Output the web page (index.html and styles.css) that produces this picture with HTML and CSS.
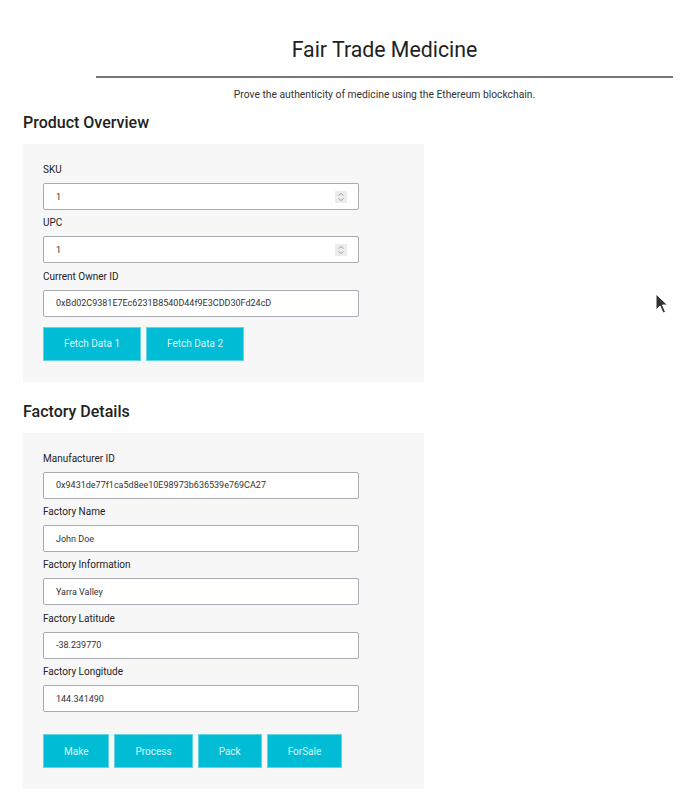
FILE: index.html
```html
<!DOCTYPE html>
<html lang="en">
<head>
<meta charset="utf-8">
<title>Fair Trade Medicine</title>
<link rel="stylesheet" href="styles.css">
</head>
<body>
<div class="page">
  <header class="header">
    <h1 class="title">Fair Trade Medicine</h1>
    <hr class="rule">
    <p class="subtitle">Prove the authenticity of medicine using the Ethereum blockchain.</p>
  </header>

  <h2 class="section-title">Product Overview</h2>
  <section class="card">
    <label class="label">SKU</label>
    <div class="field">
      <input class="input" type="text" value="1">
      <span class="spinner"><svg width="8" height="10" viewBox="0 0 8 10"><path d="M1.5 3.5 L4 1.5 L6.5 3.5 M1.5 6.5 L4 8.5 L6.5 6.5" fill="none" stroke="#9a9a9a" stroke-width="0.9"/></svg></span>
    </div>
    <label class="label">UPC</label>
    <div class="field">
      <input class="input" type="text" value="1">
      <span class="spinner"><svg width="8" height="10" viewBox="0 0 8 10"><path d="M1.5 3.5 L4 1.5 L6.5 3.5 M1.5 6.5 L4 8.5 L6.5 6.5" fill="none" stroke="#9a9a9a" stroke-width="0.9"/></svg></span>
    </div>
    <label class="label">Current Owner ID</label>
    <div class="field">
      <input class="input" type="text" value="0xBd02C9381E7Ec6231B8540D44f9E3CDD30Fd24cD">
    </div>
    <div class="buttons buttons-first">
      <button class="btn">Fetch Data 1</button>
      <button class="btn">Fetch Data 2</button>
    </div>
  </section>

  <h2 class="section-title section-gap">Factory Details</h2>
  <section class="card">
    <label class="label">Manufacturer ID</label>
    <div class="field"><input class="input" type="text" value="0x9431de77f1ca5d8ee10E98973b636539e769CA27"></div>
    <label class="label">Factory Name</label>
    <div class="field"><input class="input" type="text" value="John Doe"></div>
    <label class="label">Factory Information</label>
    <div class="field"><input class="input" type="text" value="Yarra Valley"></div>
    <label class="label">Factory Latitude</label>
    <div class="field"><input class="input" type="text" value="-38.239770"></div>
    <label class="label">Factory Longitude</label>
    <div class="field"><input class="input" type="text" value="144.341490"></div>
    <div class="buttons buttons-second">
      <button class="btn">Make</button>
      <button class="btn">Process</button>
      <button class="btn">Pack</button>
      <button class="btn">ForSale</button>
    </div>
  </section>
</div>
<svg class="cursor" width="14" height="22" viewBox="0 0 14 22"><path d="M1 1 L1 17 L5 13 L8 20 L10.5 19 L7.5 12 L12.5 12 Z" fill="#333" stroke="#fff" stroke-width="1"/></svg>
</body>
</html>
```
FILE: styles.css
```css
html, body {
  margin: 0;
  padding: 0;
  background: #ffffff;
}
body {
  font-family: Roboto, "Liberation Sans", sans-serif;
  color: #333;
}
.page {
  padding: 0 0 10px 23px;
}
.header {
  margin-left: 73px;
  width: 577px;
  text-align: center;
}
.title {
  margin: 37px 0 0;
  font-size: 21.3px;
  line-height: 25px;
  font-weight: 400;
  color: #222;
}
.rule {
  margin: 14px 0 0;
  border: 0;
  height: 2px;
  background: #777;
}
.subtitle {
  margin: 11px 0 0;
  font-size: 10.3px;
  line-height: 12px;
  color: #333;
}
.section-title {
  margin: 12px 0 0;
  font-size: 16px;
  line-height: 19px;
  font-weight: 500;
  color: #222;
}
.section-gap {
  margin-top: 20px;
}
.card {
  margin-top: 12px;
  width: 361px;
  padding: 20px 20px 21px;
  background: #f7f7f7;
  display: flex;
  flex-direction: column;
}
.label {
  display: block;
  font-size: 10px;
  line-height: 12px;
  font-weight: 400;
  color: #222;
  margin-bottom: 7px;
}
.field {
  position: relative;
  width: 316px;
  margin-bottom: 7.3px;
}
.input {
  box-sizing: border-box;
  display: block;
  width: 316px;
  height: 27px;
  margin: 0;
  padding: 0 12px;
  border: 1px solid #aaaab2;
  border-radius: 2px;
  background: #fff;
  font-family: Roboto, "Liberation Sans", sans-serif;
  font-size: 9px;
  color: #333;
  outline: none;
}
.spinner {
  position: absolute;
  right: 12px;
  top: 8px;
  width: 12px;
  height: 12px;
  background: #ececec;
  display: flex;
  align-items: center;
  justify-content: center;
}
.buttons {
  display: flex;
  gap: 5px;
}
.buttons-first {
  margin-top: 3px;
}
.buttons-second {
  margin-top: 15px;
}
.btn {
  height: 34px;
  padding: 0 20px;
  margin: 0;
  border: 1px solid #62d4e4;
  background: #00bcd4;
  color: #dff5f9;
  font-family: Roboto, "Liberation Sans", sans-serif;
  font-size: 10px;
  cursor: pointer;
}
.cursor {
  position: absolute;
  left: 655px;
  top: 293px;
}
```
